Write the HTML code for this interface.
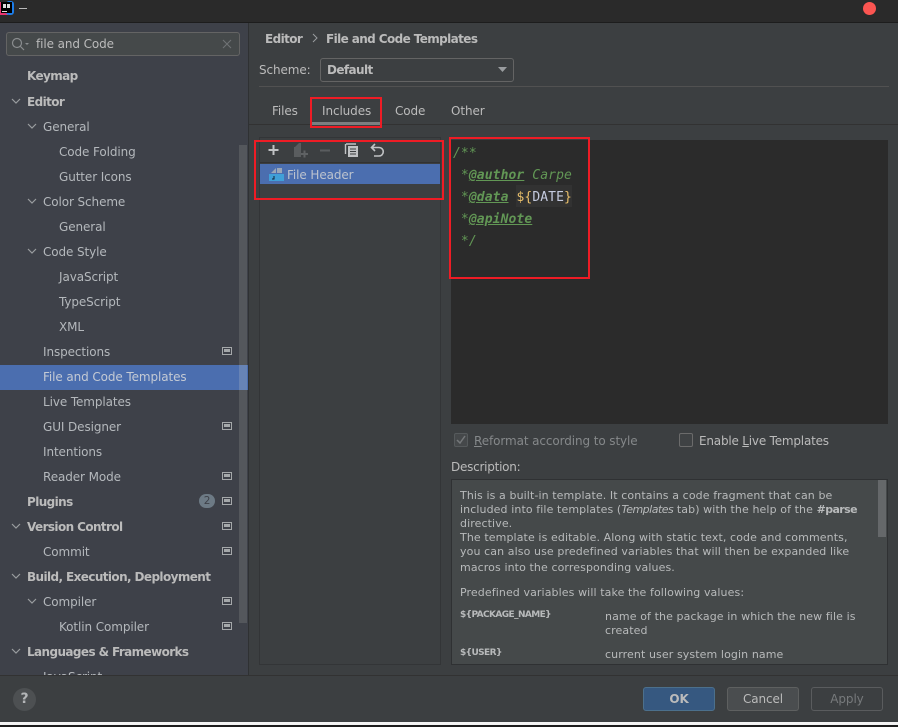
<!DOCTYPE html>
<html><head><meta charset="utf-8">
<style>
html,body{margin:0;padding:0;background:#3c3f41;}
#r{position:relative;width:898px;height:727px;overflow:hidden;background:#3c3f41;font-family:"DejaVu Sans","Liberation Sans",sans-serif;font-size:12px;letter-spacing:-.1px;color:#bbbbbb;}
.a{position:absolute;white-space:nowrap;}
.t{position:absolute;white-space:nowrap;height:25px;line-height:27px;font-size:12px;color:#b4b8bc;}
.b{font-weight:bold;color:#bbbbbb;font-size:12px;letter-spacing:-.6px;}
.t.b{line-height:25px;}
.box{position:absolute;box-sizing:border-box;border:2px solid #ee1c25;}
svg{position:absolute;}
.d{position:absolute;white-space:nowrap;font-size:11px;letter-spacing:.1px;line-height:14px;color:#b8babb;}
.d b{letter-spacing:-.6px;}
.d i{letter-spacing:-.5px;}
.m{font-size:9px;font-weight:bold;letter-spacing:-.6px;}
u{text-decoration:underline;}
</style></head><body><div id="r">
<!-- title bar -->
<div class="a" style="left:0;top:0;width:898px;height:22px;background:#2a2a2a;border-bottom:1px solid #1d1d1d;"></div>
<svg style="left:0;top:0" width="16" height="16"><rect x="0" y="2" width="8" height="13" fill="#e8336f"/><rect x="6" y="1" width="8" height="14" rx="3" fill="#1c7ce8"/><rect x="1" y="2" width="11" height="11" fill="#000"/><rect x="3" y="4" width="3" height="4" fill="#ddd"/><rect x="7" y="4" width="3" height="4" fill="#ddd"/><rect x="2" y="11" width="5" height="1" fill="#ddd"/></svg>
<div class="a" style="left:19px;top:8px;width:8px;height:1px;background:#b9b9b9;"></div>
<div class="a" style="left:863px;top:2px;width:13px;height:13px;border-radius:50%;background:#fb5551;"></div>
<!-- sidebar -->
<div class="a" style="left:0;top:23px;width:248px;height:652px;background:#3e4149;"></div>
<div class="a" style="left:248px;top:23px;width:1px;height:652px;background:#2f3133;"></div>
<div class="a" style="left:6px;top:32px;width:234px;height:24px;box-sizing:border-box;background:#45494a;border:1px solid #646464;border-radius:3px;"></div>
<svg style="left:11px;top:37px" width="18" height="14" fill="none" stroke="#8a8d8f" stroke-width="1.2"><circle cx="6" cy="6" r="4.5"/><path d="M9.5 9.5L13 13"/><path d="M14 6h4l-2 2z" fill="#8a8d8f" stroke="none"/></svg>
<div class="a" style="left:36px;top:36px;line-height:16px;color:#bbbbbb;">file and Code</div>
<svg style="left:222px;top:39px" width="10" height="10" stroke="#6f7274" stroke-width="1.1"><path d="M1 1L9 9M9 1L1 9"/></svg>

<div class="a" style="left:239px;top:145px;width:8px;height:478px;background:#54575c;"></div>
<div class="a" style="left:0;top:365px;width:248px;height:25px;background:#4b6eaf;"></div>
<div class="a" style="left:239px;top:365px;width:8px;height:25px;background:#6783b5;"></div>

<div class="t b" style="left:27px;top:64px;">Keymap</div>
<div class="t b" style="left:27px;top:90px;">Editor</div>
<div class="t" style="left:43px;top:114px;">General</div>
<div class="t" style="left:59px;top:139px;">Code Folding</div>
<div class="t" style="left:59px;top:164px;">Gutter Icons</div>
<div class="t" style="left:43px;top:189px;">Color Scheme</div>
<div class="t" style="left:59px;top:214px;">General</div>
<div class="t" style="left:43px;top:239px;">Code Style</div>
<div class="t" style="left:59px;top:264px;">JavaScript</div>
<div class="t" style="left:59px;top:289px;">TypeScript</div>
<div class="t" style="left:59px;top:314px;">XML</div>
<div class="t" style="left:43px;top:339px;">Inspections</div>
<div class="t" style="left:43px;top:364px;color:#c4cad4;">File and Code Templates</div>
<div class="t" style="left:43px;top:389px;">Live Templates</div>
<div class="t" style="left:43px;top:414px;">GUI Designer</div>
<div class="t" style="left:43px;top:439px;">Intentions</div>
<div class="t" style="left:43px;top:464px;">Reader Mode</div>
<div class="t b" style="left:27px;top:490px;">Plugins</div>
<div class="t b" style="left:27px;top:515px;">Version Control</div>
<div class="t" style="left:43px;top:539px;">Commit</div>
<div class="t b" style="left:27px;top:565px;">Build, Execution, Deployment</div>
<div class="t" style="left:43px;top:589px;">Compiler</div>
<div class="t" style="left:59px;top:614px;">Kotlin Compiler</div>
<div class="t b" style="left:27px;top:640px;">Languages &amp; Frameworks</div>
<div class="t" style="left:43px;top:664px;">JavaScript</div>

<!-- chevrons -->
<svg style="left:0;top:0" width="100" height="670" fill="none" stroke="#9a9da0" stroke-width="1.2">
<path d="M12 99l4 4 4-4M28 124l4 4 4-4M28 199l4 4 4-4M28 249l4 4 4-4M12 524l4 4 4-4M12 574l4 4 4-4M28 599l4 4 4-4M12 649l4 4 4-4"/>
</svg>
<!-- project icons -->
<svg style="left:222px;top:345px" width="10" height="290" fill="none" stroke="#a5a8aa" stroke-width="1">
<g id="p"><rect x="0.5" y="2.500" width="9" height="7"/><rect x="2" y="4" width="6" height="3" fill="#a5a8aa" stroke="none"/></g>
<use href="#p" y="75"/><use href="#p" y="125"/><use href="#p" y="150"/><use href="#p" y="175"/><use href="#p" y="200"/><use href="#p" y="250"/><use href="#p" y="275"/>
</svg>
<div class="a" style="left:199px;top:494px;width:16px;height:14px;border-radius:7px;background:#6d7a85;color:#3e4149;font-size:10.500px;line-height:14px;text-align:center;">2</div>

<!-- header -->
<div class="a b" style="left:265px;top:31px;line-height:16px;">Editor</div>
<svg style="left:312px;top:33px" width="6" height="10" fill="none" stroke="#9a9da0"><path d="M1 1l4 4-4 4"/></svg>
<div class="a b" style="left:326px;top:31px;line-height:16px;">File and Code Templates</div>
<div class="a" style="left:259px;top:62px;line-height:16px;">Scheme:</div>
<div class="a" style="left:320px;top:58px;width:194px;height:24px;box-sizing:border-box;background:#3c3f41;border:1px solid #646464;border-radius:3px;"></div>
<div class="a b" style="left:327px;top:62px;line-height:16px;">Default</div>
<svg style="left:498px;top:67px" width="10" height="6"><path d="M0 0h9l-4.500 5z" fill="#9a9da0"/></svg>
<div class="a" style="left:259px;top:86px;width:630px;height:1px;background:#515151;"></div>
<!-- tabs -->
<div class="a" style="left:272px;top:103px;line-height:16px;">Files</div>
<div class="a" style="left:322px;top:103px;line-height:16px;">Includes</div>
<div class="a" style="left:395px;top:103px;line-height:16px;">Code</div>
<div class="a" style="left:451px;top:103px;line-height:16px;">Other</div>
<div class="a" style="left:249px;top:124px;width:649px;height:1px;background:#323232;"></div>
<div class="a" style="left:311px;top:122px;width:71px;height:3px;background:#7c7f81;"></div>

<!-- list panel -->
<div class="a" style="left:259px;top:137px;width:182px;height:528px;box-sizing:border-box;border:1px solid #333537;background:#3c3f41;"></div>
<div class="a" style="left:260px;top:162px;width:180px;height:1px;background:#323232;"></div>
<div class="a" style="left:260px;top:164px;width:180px;height:20px;background:#4b6eaf;"></div>
<svg style="left:260px;top:140px" width="130" height="20" fill="none">
<path d="M8.500 10h10M13.500 5v10" stroke="#c0c2c4" stroke-width="2"/>
<path d="M35 7L39 3h2v14h-7v-10z" fill="#5a5d5f"/><path d="M41 14h7M44.500 10.500v7" stroke="#5f6264" stroke-width="2"/>
<path d="M60 10.500h10" stroke="#5a5d5f" stroke-width="2"/>
<path d="M86 4h10M85.500 4v10" stroke="#c0c2c4" stroke-width="1.400"/><rect x="88" y="6" width="10" height="11" fill="#c0c2c4"/><path d="M90 9h6M90 11.500h6M90 14h6" stroke="#3c3f41"/>
<path d="M115 4l-3.500 3.500 3.500 3.500M112 7.500h7a4.200 4.200 0 0 1 0 8.500h-5" stroke="#c0c2c4" stroke-width="1.600"/>
</svg>
<svg style="left:268px;top:167px" width="16" height="15"><path d="M3 6L8 1v5zM9 1h5v5H9z" fill="#9aa7b8"/><rect x="1" y="7" width="15" height="7" fill="#40a0d8"/><path d="M6 9v3H4" stroke="#123" fill="none"/></svg>
<div class="a" style="left:287px;top:167px;line-height:16px;color:#bcc3ce;">File Header</div>

<!-- editor -->
<div class="a" style="left:451px;top:140px;width:437px;height:284px;background:#2b2b2b;"></div>
<div class="a" style="left:516px;top:185px;width:56px;height:22px;background:#323232;"></div>
<div class="a" style="left:453px;top:143px;font-family:'DejaVu Sans Mono','Liberation Mono',monospace;font-size:13px;letter-spacing:.1px;line-height:22px;color:#629755;font-style:italic;white-space:pre;">/**
 *<b style="text-decoration:underline;">@author</b> Carpe
 *<b style="text-decoration:underline;">@data</b> <span style="font-style:normal;color:#e8bf6a;">$</span><span style="font-style:normal;color:#e8bf6a;">{</span><span style="font-style:normal;color:#c5cbdf;">DATE</span><span style="font-style:normal;color:#e8bf6a;">}</span>
 *<b style="text-decoration:underline;">@apiNote</b>
 */</div>

<!-- checkboxes -->
<div class="a" style="left:454px;top:433px;width:14px;height:14px;box-sizing:border-box;background:#45484a;border:1px solid #565a5c;border-radius:2px;"></div>
<svg style="left:456px;top:435px" width="11" height="10" fill="none" stroke="#75787a" stroke-width="1.500"><path d="M1 5l3 3 5-7"/></svg>
<div class="a" style="left:474px;top:433px;line-height:16px;color:#85888a;"><u>R</u>eformat according to style</div>
<div class="a" style="left:679px;top:433px;width:14px;height:14px;box-sizing:border-box;background:#3f4244;border:1px solid #6b6b6b;border-radius:2px;"></div>
<div class="a" style="left:699px;top:433px;line-height:16px;letter-spacing:-.2px;">Enable <u>L</u>ive Templates</div>
<div class="a" style="left:451px;top:459px;line-height:16px;letter-spacing:-.25px;">Description:</div>

<!-- description -->
<div class="a" style="left:451px;top:479px;width:437px;height:186px;box-sizing:border-box;background:#45494a;border:1px solid #2f3133;overflow:hidden;">
<div class="a" style="left:426px;top:0;width:8px;height:57px;background:#65686a;"></div>
<div class="d" style="left:8px;top:9px;">This is a built-in template. It contains a code fragment that can be</div>
<div class="d" style="left:8px;top:23px;">included into file templates (<i>Templates</i> tab) with the help of the <b>#parse</b></div>
<div class="d" style="left:8px;top:37px;">directive.</div>
<div class="d" style="left:8px;top:51px;">The template is editable. Along with static text, code and comments,</div>
<div class="d" style="left:8px;top:65px;">you can also use predefined variables that will then be expanded like</div>
<div class="d" style="left:8px;top:81px;">macros into the corresponding values.</div>
<div class="d" style="left:8px;top:106px;">Predefined variables will take the following values:</div>
<div class="d m" style="left:8px;top:128px;">${PACKAGE_NAME}</div>
<div class="d" style="left:153px;top:130px;">name of the package in which the new file is</div>
<div class="d" style="left:153px;top:144px;">created</div>
<div class="d m" style="left:8px;top:166px;">${USER}</div>
<div class="d" style="left:153px;top:168px;">current user system login name</div>
</div>

<!-- red boxes -->
<div class="box" style="left:310px;top:97px;width:72px;height:31px;"></div>
<div class="box" style="left:254px;top:140px;width:190px;height:60px;"></div>
<div class="box" style="left:449px;top:137px;width:141px;height:142px;"></div>

<!-- bottom -->
<div class="a" style="left:0;top:675px;width:898px;height:47px;background:#3c3f41;border-top:1px solid #323232;box-sizing:border-box;"></div>
<div class="a" style="left:13px;top:688px;width:23px;height:23px;border-radius:50%;background:#4d5052;color:#b4b6b8;font-weight:bold;font-size:14px;line-height:23px;text-align:center;">?</div>
<div class="a" style="left:643px;top:687px;width:72px;height:24px;box-sizing:border-box;background:#365880;border:1px solid #4c708c;border-radius:3px;font-weight:bold;font-size:12px;line-height:22px;text-align:center;color:#bbbbbb;">OK</div>
<div class="a" style="left:727px;top:687px;width:72px;height:24px;box-sizing:border-box;background:#4a4d4f;border:1px solid #5e6060;border-radius:3px;line-height:22px;text-align:center;">Cancel</div>
<div class="a" style="left:811px;top:687px;width:72px;height:24px;box-sizing:border-box;background:#3c3f41;border:1px solid #5a5c5e;border-radius:3px;line-height:22px;text-align:center;color:#777a7c;">Apply</div>
<div class="a" style="left:0;top:722px;width:898px;height:3px;background:#f2f2f2;"></div>
<div class="a" style="left:0;top:725px;width:898px;height:2px;background:#1c1c1c;"></div>
</div></body></html>
